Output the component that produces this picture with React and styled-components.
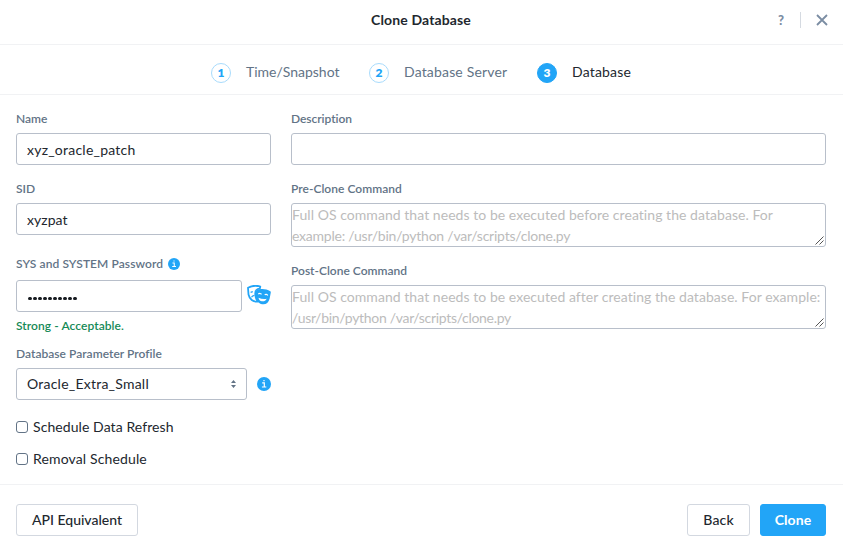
import React from "react";
import styled, { createGlobalStyle } from "styled-components";

const blue = "#22a5f7";
const ink = "#22272e";
const slate = "#627386";
const line = "#b8bfca";

const GlobalStyle = createGlobalStyle`
  *, *::before, *::after { box-sizing: border-box; }
  body { margin: 0; background: #fff; font-family: Lato, "Liberation Sans", sans-serif; font-size: 14px; color: ${ink}; }
  button, input { font-family: inherit; }
`;

const Dialog = styled.main`
  width: 843px;
  height: 555px;
  display: flex;
  flex-direction: column;
  background: #fff;
  overflow: hidden;
`;

const Header = styled.header`
  height: 45px;
  flex: none;
  display: grid;
  grid-template-columns: 1fr auto 1fr;
  align-items: center;
  padding: 0 14px 4px 13px;
  border-bottom: 1px solid #f1f2f4;
`;

const Title = styled.h1`
  grid-column: 2;
  margin: 0;
  font-size: 14px;
  line-height: 20px;
  font-weight: 700;
  letter-spacing: 0.14px;
`;

const HeaderActions = styled.div`
  display: flex;
  justify-content: flex-end;
  align-items: center;
  height: 16px;
`;

const IconButton = styled.button`
  display: flex;
  align-items: center;
  justify-content: center;
  width: ${(p) => p.$width}px;
  height: 16px;
  padding: 0;
  border: 0;
  background: none;
  color: #7b8da3;
  font-size: 13px;
  font-weight: 900;
`;

const ActionDivider = styled.span`
  width: 1px;
  height: 16px;
  margin: 0 14px;
  background: #d5dae1;
`;

const Steps = styled.nav`
  height: 50px;
  flex: none;
  display: flex;
  align-items: center;
  padding: 6px 0 0 211px;
  border-bottom: 1px solid #f1f2f4;
`;

const Step = styled.div`
  display: flex;
  align-items: center;
  gap: 15px;
  width: ${(p) => p.$width}px;
  color: ${(p) => (p.$active ? ink : slate)};
  letter-spacing: ${(p) => p.$spacing}px;
  white-space: nowrap;
`;

const RaisedText = styled.span`
  display: block;
  padding-bottom: 2px;
`;

const StepNumber = styled.span`
  width: 20px;
  height: 20px;
  flex: none;
  display: flex;
  align-items: center;
  justify-content: center;
  border: 1px solid ${(p) => (p.$active ? blue : "#a8dbfc")};
  border-radius: 50%;
  background: ${(p) => (p.$active ? blue : "#fff")};
  color: ${(p) => (p.$active ? "#fff" : blue)};
  font-size: 12px;
  font-weight: 800;
  letter-spacing: 0;
`;

const Form = styled.form`
  flex: 1;
  display: grid;
  grid-template-columns: 255px 535px;
  column-gap: 20px;
  padding: 14px 16px 0;
`;

const Column = styled.div`
  display: flex;
  flex-direction: column;
`;

const Field = styled.div`
  display: flex;
  flex-direction: column;
  margin-bottom: ${(p) => p.$gap ?? 14}px;
`;

const LabelRow = styled.label`
  display: flex;
  align-items: center;
  gap: 5px;
  height: 20px;
  margin-bottom: ${(p) => p.$gap ?? 4}px;
  color: ${slate};
  font-size: 12px;
  font-weight: 600;
  letter-spacing: ${(p) => p.$spacing ?? 0}px;
`;

const Input = styled.input`
  width: 100%;
  height: 32px;
  padding: 0 10px;
  border: 1px solid ${line};
  border-radius: 3px;
  outline: 0;
  background: #fff;
  color: ${ink};
  font-size: 14px;
  letter-spacing: ${(p) => p.$spacing ?? 0}px;
`;

const FieldRow = styled.div`
  display: flex;
  align-items: center;
  gap: ${(p) => p.$gap}px;
`;

const PasswordDots = styled.div`
  display: flex;
  align-items: center;
  gap: 1.2px;
  width: 226px;
  height: 32px;
  padding: 5px 11px 0;
  border: 1px solid ${line};
  border-radius: 3px;
`;

const Dot = styled.span`
  width: 3.8px;
  height: 3.8px;
  border-radius: 50%;
  background: #171b20;
`;

const Strength = styled.p`
  height: 20px;
  margin: 4px 0 8px;
  color: #168a57;
  font-size: 12px;
  line-height: 20px;
  font-weight: 600;
  letter-spacing: 0.07px;
`;

const Select = styled.button`
  display: flex;
  align-items: center;
  justify-content: space-between;
  width: 231px;
  height: 32px;
  padding: 0 10px;
  border: 1px solid ${line};
  border-radius: 3px;
  background: #fff;
  color: ${ink};
  font-size: 14px;
  letter-spacing: 0.23px;
`;

const CommandBox = styled.div`
  position: relative;
  height: 44px;
  border: 1px solid ${line};
  border-radius: 3px;
  color: #bcbcbc;
  font-size: 14px;
  line-height: 21px;
  white-space: nowrap;
  overflow: hidden;
`;

const CommandLine = styled.div`
  letter-spacing: ${(p) => p.$spacing}px;
`;

const ResizeGrip = styled.svg`
  position: absolute;
  right: 1px;
  bottom: 1px;
`;

const CheckRow = styled.label`
  display: flex;
  align-items: center;
  gap: 5px;
  height: 20px;
  margin-bottom: 12px;
  letter-spacing: ${(p) => p.$spacing}px;
`;

const Checkbox = styled.input`
  appearance: none;
  width: 12px;
  height: 12px;
  margin: 0;
  border: 1px solid #627386;
  border-radius: 3px;
  background: #fff;
`;

const Footer = styled.footer`
  height: 71px;
  flex: none;
  display: flex;
  align-items: flex-start;
  gap: 10px;
  padding: 19px 17px 0 16px;
  border-top: 1px solid #f1f2f4;
`;

const Button = styled.button`
  width: ${(p) => p.$width}px;
  height: 32px;
  padding: 0 0 2px;
  border: 1px solid ${(p) => (p.$primary ? blue : "#d3d8e0")};
  border-radius: 3px;
  background: ${(p) => (p.$primary ? blue : "#fff")};
  color: ${(p) => (p.$primary ? "#fff" : ink)};
  font-size: 14px;
  font-weight: ${(p) => (p.$primary ? 700 : 500)};
  letter-spacing: ${(p) => p.$spacing ?? 0}px;
`;

const Spacer = styled.span`
  flex: 1;
`;

const MasksSvg = styled.svg`
  margin-bottom: 2px;
`;

function InfoIcon({ size }) {
  return (
    <svg width={size} height={size} viewBox="0 0 14 14" aria-label="Info">
      <circle cx="7" cy="7" r="7" fill={blue} />
      <path d="M5.2 5.8h2.1v4.1M4.9 10h4.4M6.4 3.6h1.2" fill="none" stroke="#fff" strokeWidth="1.2" />
    </svg>
  );
}

function MasksIcon() {
  return (
    <MasksSvg width="24" height="20" viewBox="0 0 24 20" aria-label="Show password">
      <path d="M1 2.7C4.5.8 9 .2 13.3 1.5L12.8 3.6C8.5 4 8 6 8.3 9.500c.2 2.800 1 5 2.500 7C6 17.500 2.500 14 1.500 9.500Z" fill="#fff" stroke={blue} strokeWidth="1.800" strokeLinejoin="round" />
      <path d="M3.600 7.300l2.200-.7M4.500 12.300c.6-1.200 1.600-1.800 3-2" fill="none" stroke={blue} strokeWidth="1.300" />
      <path d="M9.400 5.500C13.500 3.200 19 3.700 23.300 6.300c.5.300.6.700.5 1.200l-1.200 6.200c-.9 4-4 6.100-7.300 5.500-4-.7-6.300-3.800-6.500-7.500l-.1-5.300c0-.4.2-.7.7-.9Z" fill={blue} />
      <path d="M11.300 9.100c.9-1 2.400-.9 3.200.3M17.700 9.900c.9-.9 2.500-.6 3.100.6" fill="none" stroke="#fff" strokeWidth="1.100" />
      <path d="M11.500 12.700c2.500 1.100 5.300 1.500 8.200 1-1 2-2.700 2.900-4.700 2.600-2-.3-3.200-1.600-3.500-3.600Z" fill="#fff" />
    </MasksSvg>
  );
}

function SortIcon() {
  return (
    <svg width="5" height="8" viewBox="0 0 5 8" fill="#627386" aria-hidden="true">
      <path d="M0 3 2.500 0 5 3ZM0 5h5L2.500 8Z" />
    </svg>
  );
}

function Label({ children, gap, spacing, icon }) {
  return (
    <LabelRow $gap={gap} $spacing={spacing}>
      <RaisedText>{children}</RaisedText>
      {icon}
    </LabelRow>
  );
}

function CheckOption({ label, spacing }) {
  return (
    <CheckRow $spacing={spacing}>
      <Checkbox type="checkbox" />
      <RaisedText>{label}</RaisedText>
    </CheckRow>
  );
}

function Command({ lines }) {
  return (
    <CommandBox role="textbox" aria-multiline="true">
      {lines.map(([text, spacing]) => (
        <CommandLine key={text} $spacing={spacing}>{text}</CommandLine>
      ))}
      <ResizeGrip width="9" height="9" viewBox="0 0 9 9" stroke="#555" fill="none">
        <path d="M.5 8.500l8-8M4.500 8.500l4-4" />
      </ResizeGrip>
    </CommandBox>
  );
}

const steps = [
  { label: "Time/Snapshot", width: 158, spacing: -0.01 },
  { label: "Database Server", width: 168, spacing: 0.17 },
  { label: "Database", width: 100, spacing: 0.18, active: true },
];

export default function App() {
  return (
    <>
      <GlobalStyle />
      <Dialog>
        <Header>
          <Title>Clone Database</Title>
          <HeaderActions>
            <IconButton $width={10} aria-label="Help">?</IconButton>
            <ActionDivider />
            <IconButton $width={14} aria-label="Close">
              <svg width="12" height="12" viewBox="0 0 12 12" stroke="currentColor" strokeWidth="1.800">
                <path d="M1 1l10 10M11 1L1 11" />
              </svg>
            </IconButton>
          </HeaderActions>
        </Header>
        <Steps>
          {steps.map((s, i) => (
            <Step key={s.label} $width={s.width} $spacing={s.spacing} $active={s.active}>
              <StepNumber $active={s.active}>{i + 1}</StepNumber>
              <RaisedText>{s.label}</RaisedText>
            </Step>
          ))}
        </Steps>
        <Form>
          <Column>
            <Field>
              <Label>Name</Label>
              <Input defaultValue="xyz_oracle_patch" $spacing={0.23} />
            </Field>
            <Field $gap={19}>
              <Label>SID</Label>
              <Input defaultValue="xyzpat" $spacing={0.04} />
            </Field>
            <Field $gap={0}>
              <Label gap={6} spacing={0.08} icon={<InfoIcon size={12} />}>
                SYS and SYSTEM Password
              </Label>
              <FieldRow $gap={5}>
                <PasswordDots role="textbox" aria-label="Password">
                  {Array.from({ length: 10 }, (_, i) => <Dot key={i} />)}
                </PasswordDots>
                <MasksIcon />
              </FieldRow>
              <Strength>Strong - Acceptable.</Strength>
            </Field>
            <Field $gap={17}>
              <Label spacing={0.03}>Database Parameter Profile</Label>
              <FieldRow $gap={10}>
                <Select type="button">
                  <RaisedText>Oracle_Extra_Small</RaisedText>
                  <SortIcon />
                </Select>
                <InfoIcon size={14} />
              </FieldRow>
            </Field>
            <CheckOption label="Schedule Data Refresh" spacing={0.08} />
            <CheckOption label="Removal Schedule" spacing={0.14} />
          </Column>
          <Column>
            <Field>
              <Label spacing={-0.05}>Description</Label>
              <Input />
            </Field>
            <Field>
              <Label spacing={0.03}>Pre-Clone Command</Label>
              <Command
                lines={[
                  ["Full OS command that needs to be executed before creating the database. For", 0.05],
                  ["example: /usr/bin/python /var/scripts/clone.py", -0.23],
                ]}
              />
            </Field>
            <Field>
              <Label>Post-Clone Command</Label>
              <Command
                lines={[
                  ["Full OS command that needs to be executed after creating the database. For example:", 0.05],
                  ["/usr/bin/python /var/scripts/clone.py", -0.31],
                ]}
              />
            </Field>
          </Column>
        </Form>
        <Footer>
          <Button $width={122}>API Equivalent</Button>
          <Spacer />
          <Button $width={63} $spacing={0.16}>Back</Button>
          <Button $width={66} $spacing={0.1} $primary>Clone</Button>
        </Footer>
      </Dialog>
    </>
  );
}
